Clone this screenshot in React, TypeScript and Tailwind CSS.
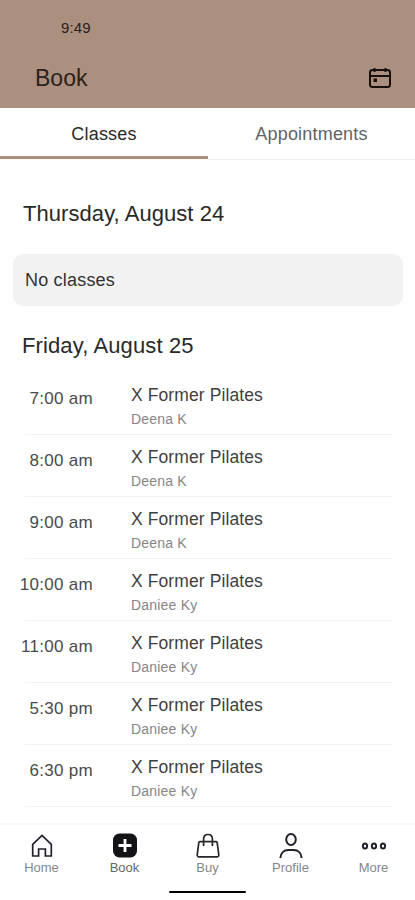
import React from "react";

const classes = [
  { time: "7:00 am", teacher: "Deena K" },
  { time: "8:00 am", teacher: "Deena K" },
  { time: "9:00 am", teacher: "Deena K" },
  { time: "10:00 am", teacher: "Daniee Ky" },
  { time: "11:00 am", teacher: "Daniee Ky" },
  { time: "5:30 pm", teacher: "Daniee Ky" },
  { time: "6:30 pm", teacher: "Daniee Ky" },
];

const CalendarIcon: React.FC = () => (
  <svg width="24" height="22" viewBox="0 0 24 22" fill="none" stroke="#17100c" strokeWidth="2">
    <rect x="2" y="3" width="20" height="17" rx="2.5" />
    <path d="M2 9h20M6.5 1v4M17.5 1v4" />
    <rect x="5.5" y="11.5" width="3.5" height="3.5" fill="#17100c" stroke="none" />
  </svg>
);

const HomeIcon: React.FC = () => (
  <svg width="26" height="26" viewBox="0 0 26 26" fill="none" stroke="#20202c" strokeWidth="1.7">
    <path d="M3.7 11.3 13 2.4l9.3 8.9v11.7h-5.9v-7H9.6v7H3.7z" />
  </svg>
);

const BookIcon: React.FC = () => (
  <svg width="26" height="26" viewBox="0 0 26 26" fill="none">
    <rect x="1" y="0.5" width="24" height="24" rx="6.5" fill="#141416" />
    <path d="M13 6v13M6.5 12.5h13" stroke="#fff" strokeWidth="2.8" />
  </svg>
);

const BuyIcon: React.FC = () => (
  <svg width="26" height="26" viewBox="0 0 26 26" fill="none" stroke="#26262b" strokeWidth="1.7">
    <path d="M4.8 8.7h16.4a1 1 0 0 1 1 .9l1.6 12.2a1.8 1.8 0 0 1-1.8 2H4a1.8 1.8 0 0 1-1.8-2L3.800 9.600a1 1 0 0 1 1-.9z" />
    <path d="M8.600 13V6C8.600 3 10.100 1.500 13 1.500S17.400 3 17.400 6v7" />
  </svg>
);

const ProfileIcon: React.FC = () => (
  <svg width="26" height="26" viewBox="0 0 26 26" fill="none" stroke="#20202c" strokeWidth="2">
    <ellipse cx="13" cy="6.500" rx="4.800" ry="5.400" />
    <path d="M2.400 25c.3-4.800 3.400-7.900 8-7.900h5.200c4.600 0 7.700 3.100 8 7.900" />
  </svg>
);

const MoreIcon: React.FC = () => (
  <svg width="26" height="26" viewBox="0 0 26 26" fill="none" stroke="#20202c" strokeWidth="2">
    <ellipse cx="4" cy="13" rx="2.100" ry="2.600" />
    <ellipse cx="13" cy="13" rx="2.100" ry="2.600" />
    <ellipse cx="22" cy="13" rx="2.100" ry="2.600" />
  </svg>
);

const tabs = [
  { label: "Home", Icon: HomeIcon },
  { label: "Book", Icon: BookIcon, active: true },
  { label: "Buy", Icon: BuyIcon },
  { label: "Profile", Icon: ProfileIcon },
  { label: "More", Icon: MoreIcon },
];

const App: React.FC = () => {
  return (
    <div className="flex h-[900px] w-[415px] flex-col overflow-hidden bg-white font-['Liberation_Sans',sans-serif] text-[#292929]">
      <header className="h-[108px] shrink-0 bg-[#ab907f] text-[#2a211c]">
        <p className="pt-[18px] pl-[61px] text-[15px] leading-5 tracking-[0.1px]">9:49</p>
        <div className="mt-[26px] flex items-center justify-between pr-[23px] pl-[35px]">
          <h1 className="text-[23px] leading-7">Book</h1>
          <CalendarIcon />
        </div>
      </header>

      <div className="flex h-[52px] shrink-0 text-center text-[18px] tracking-[0.2px]">
        <button className="h-[51px] w-[208px] border-b-[3px] border-[#ab907f] pt-[4px]">Classes</button>
        <button className="h-[52px] flex-1 border-b border-[#efefef] pt-[1px] text-[#606366]">Appointments</button>
      </div>

      <main className="flex-1">
        <h2 className="mt-[40px] pl-[23px] text-[22px] leading-7 tracking-[0.06px]">Thursday, August 24</h2>
        <div className="mr-3 ml-[13px] mt-[26px] h-[52px] rounded-[10px] bg-[#f2f2f2] pl-3 text-[18px] leading-[52px] tracking-[0.2px] text-[#333]">
          No classes
        </div>
        <h2 className="mt-[26px] pl-[22px] text-[22px] leading-7 tracking-[0.12px]">Friday, August 25</h2>

        <ul className="mt-[13px] mr-[23px] ml-[25px]">
          {classes.map(({ time, teacher }) => (
            <li key={time} className="flex h-[62px] border-b border-[#f3f3f3]">
              <p className="-ml-[10px] w-[78px] pt-[16px] text-right text-[17px] leading-5 tracking-[0.3px] whitespace-nowrap text-[#4a4a4a]">
                {time}
              </p>
              <div className="pt-[12px] pl-[38px]">
                <p className="text-[17.5px] leading-5 tracking-[0.1px] text-[#3f3f3f]">X Former Pilates</p>
                <p className="mt-[5px] text-[14px] leading-[18px] tracking-[0.2px] text-[#858589]">{teacher}</p>
              </div>
            </li>
          ))}
        </ul>
      </main>

      <nav className="flex h-[77px] shrink-0 flex-col border-t-2 border-[#f8f8f8]">
        <div className="grid grid-cols-5">
          {tabs.map(({ label, Icon, active }) => (
            <div key={label} className="flex flex-col items-center pt-2">
              <Icon />
              <span className={active ? "text-[13px] leading-[18px] text-[#666]" : "text-[13px] leading-[18px] text-[#858589]"}>
                {label}
              </span>
            </div>
          ))}
        </div>
        <div className="mx-auto mt-[14px] h-[2px] w-[77px] rounded-full bg-black" />
      </nav>
    </div>
  );
};

export default App;
